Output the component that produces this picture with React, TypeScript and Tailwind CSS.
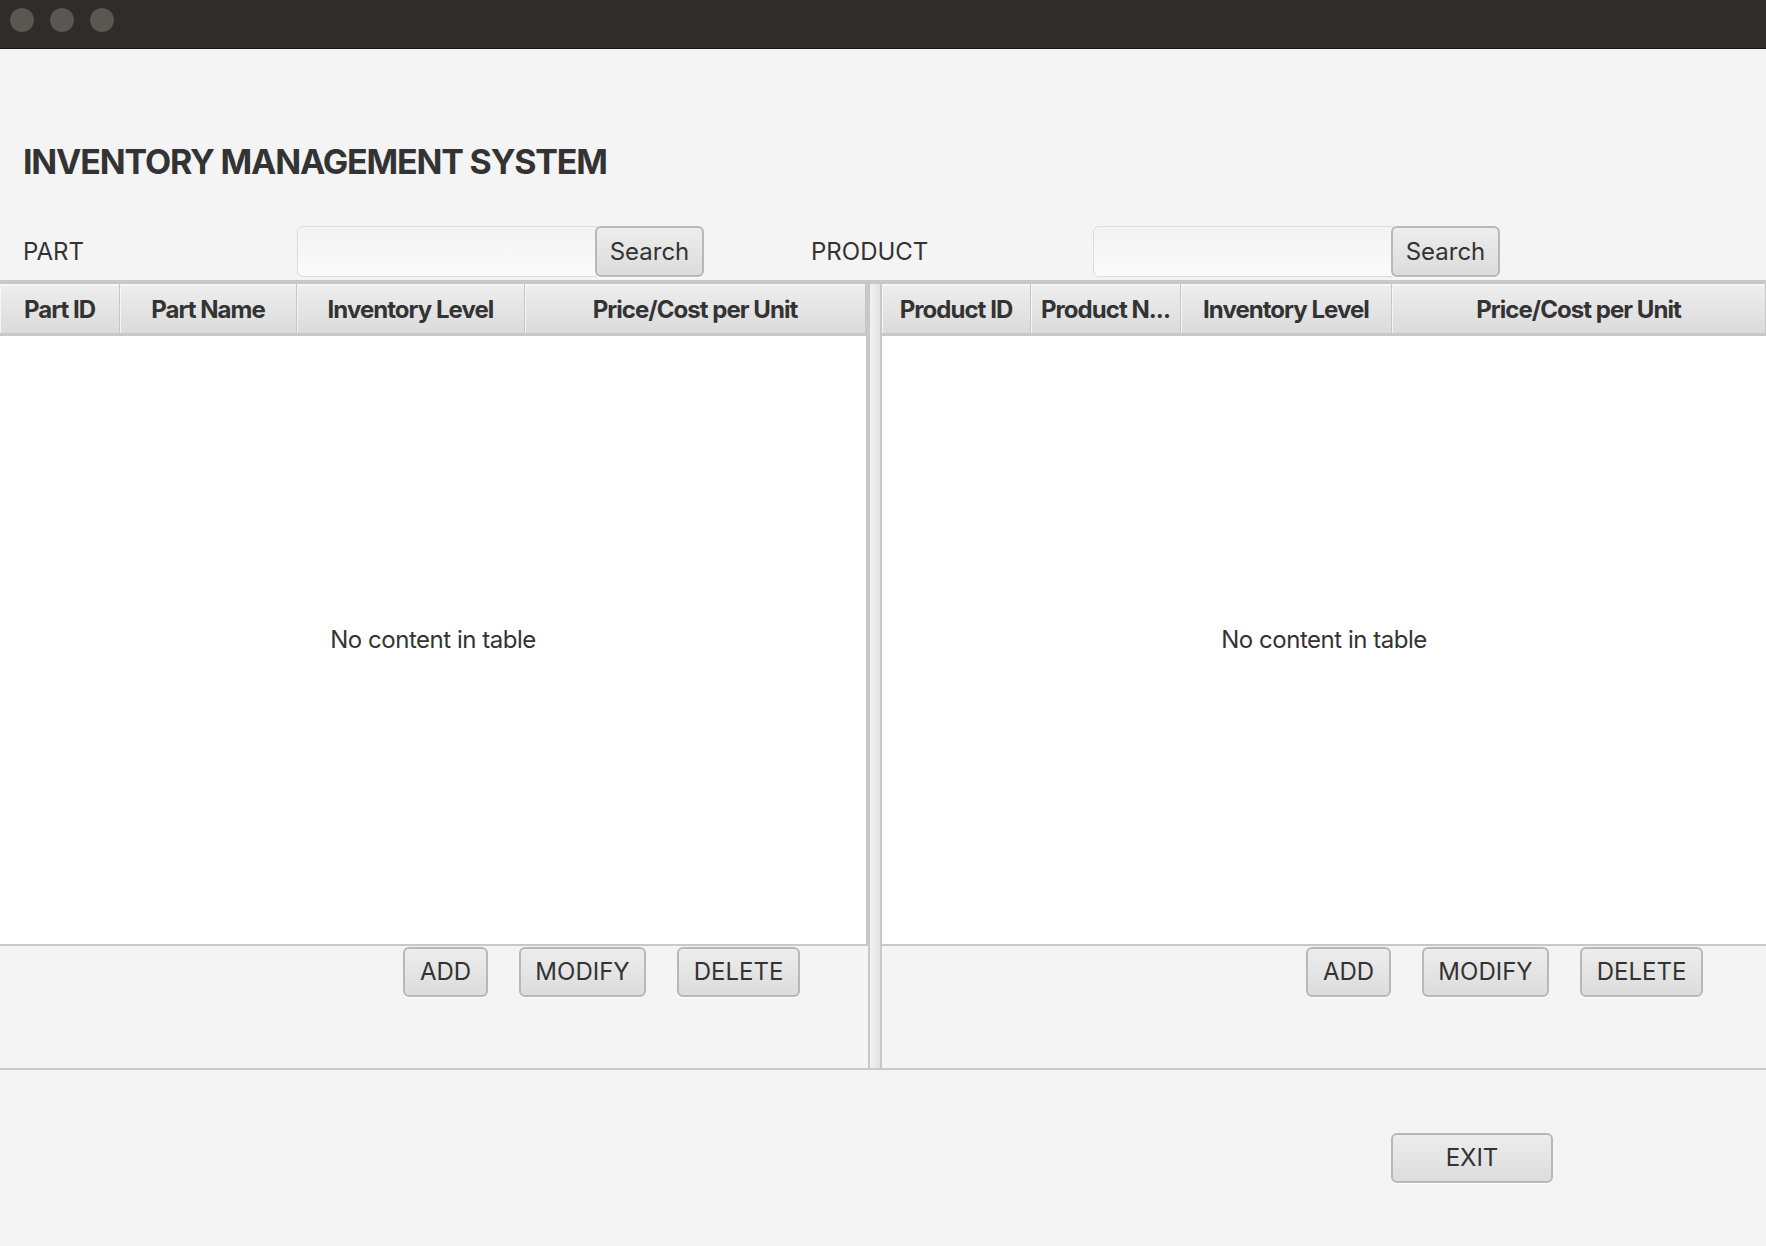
import React from "react";

const btn =
  "h-[50px] rounded-[6px] border-2 border-[#b8b8b8] bg-gradient-to-b from-[#ededed] to-[#dcdcdc] shadow-[0_1px_0_#ffffff] text-[24px] text-[#333333] flex items-center justify-center";

const HeaderCell = ({ label, w }: { label: string; w?: string }) => (
  <div
    className={`${w ?? "flex-1"} h-full flex items-center justify-center pt-[3px] border-r border-[#c6c6c6] shadow-[inset_1px_2px_0_#f6f6f6] text-[24px] font-bold tracking-[-0.04em] text-[#333333] whitespace-nowrap overflow-hidden`}
  >
    {label}
  </div>
);

const Table = ({
  cols,
  rightBorder,
}: {
  cols: { label: string; w?: string }[];
  rightBorder: boolean;
}) => (
  <div
    className={`flex flex-col bg-white border-b-2 border-[#c8c8c8] ${
      rightBorder ? "border-r-2" : ""
    }`}
  >
    <div className="h-[52px] flex bg-gradient-to-b from-[#eeeeee] to-[#dbdbdb] border-b-[3px] border-[#c8c8c8]">
      {cols.map((c) => (
        <HeaderCell key={c.label} label={c.label} w={c.w} />
      ))}
    </div>
    <div className="h-[608px] flex items-center justify-center text-[24px] tracking-[-0.02em] text-[#333333]">
      No content in table
    </div>
  </div>
);

const Actions = ({ pr }: { pr: string }) => (
  <div className={`flex-1 flex justify-end items-start pt-px gap-[31px] ${pr}`}>
    <button className={`${btn} w-[85px]`}>ADD</button>
    <button className={`${btn} w-[127px]`}>MODIFY</button>
    <button className={`${btn} w-[123px]`}>DELETE</button>
  </div>
);

const SearchBox = () => (
  <div className="flex h-[51px]">
    <div className="w-[300px] h-full rounded-l-[6px] border border-[#dcdcdc] bg-gradient-to-b from-[#f3f3f3] to-[#fbfbfb]" />
    <button className={`${btn} -ml-[2px] w-[109px] h-[51px]`}>Search</button>
  </div>
);

export default function App() {
  return (
    <div className="w-[1766px] h-[1246px] bg-[#f4f4f4] flex flex-col font-['Inter','Liberation_Sans',sans-serif] text-[#333333] overflow-hidden">
      {/* title bar */}
      <div className="h-[49px] bg-[#302c29] border-b border-[#1b1917] flex items-start gap-4 pl-[10px] pt-[8px]">
        <span className="w-6 h-6 rounded-full bg-[#5a5652]" />
        <span className="w-6 h-6 rounded-full bg-[#5a5652]" />
        <span className="w-6 h-6 rounded-full bg-[#5a5652]" />
      </div>

      <h1 className="mt-[93px] pl-[23px] h-[40px] leading-[40px] text-[34px] font-bold tracking-[-0.035em] text-[#333333]">
        INVENTORY MANAGEMENT SYSTEM
      </h1>

      {/* search row */}
      <div className="mt-[44px] h-[51px] flex items-center pl-[23px]">
        <div className="w-[274px] text-[24px]">PART</div>
        <SearchBox />
        <div className="w-[107px]" />
        <div className="w-[282px] text-[24px]">PRODUCT</div>
        <SearchBox />
      </div>

      {/* split pane */}
      <div className="mt-[3px] h-[790px] flex border-t-4 border-b-2 border-[#c8c8c8]">
        <div className="w-[868px] flex flex-col">
          <Table
            rightBorder
            cols={[
              { label: "Part ID", w: "w-[120px]" },
              { label: "Part Name", w: "w-[177px]" },
              { label: "Inventory Level", w: "w-[228px]" },
              { label: "Price/Cost per Unit" },
            ]}
          />
          <Actions pr="pr-[68px]" />
        </div>
        <div className="w-[14px] border-x-2 border-[#c8c8c8] bg-gradient-to-r from-[#f2f2f2] to-[#e2e2e2]" />
        <div className="flex-1 flex flex-col">
          <Table
            rightBorder={false}
            cols={[
              { label: "Product ID", w: "w-[149px]" },
              { label: "Product N...", w: "w-[150px]" },
              { label: "Inventory Level", w: "w-[211px]" },
              { label: "Price/Cost per Unit" },
            ]}
          />
          <Actions pr="pr-[63px]" />
        </div>
      </div>

      {/* footer */}
      <div className="flex-1 flex justify-end items-start pt-[63px] pr-[213px]">
        <button className={`${btn} w-[162px]`}>EXIT</button>
      </div>
    </div>
  );
}
